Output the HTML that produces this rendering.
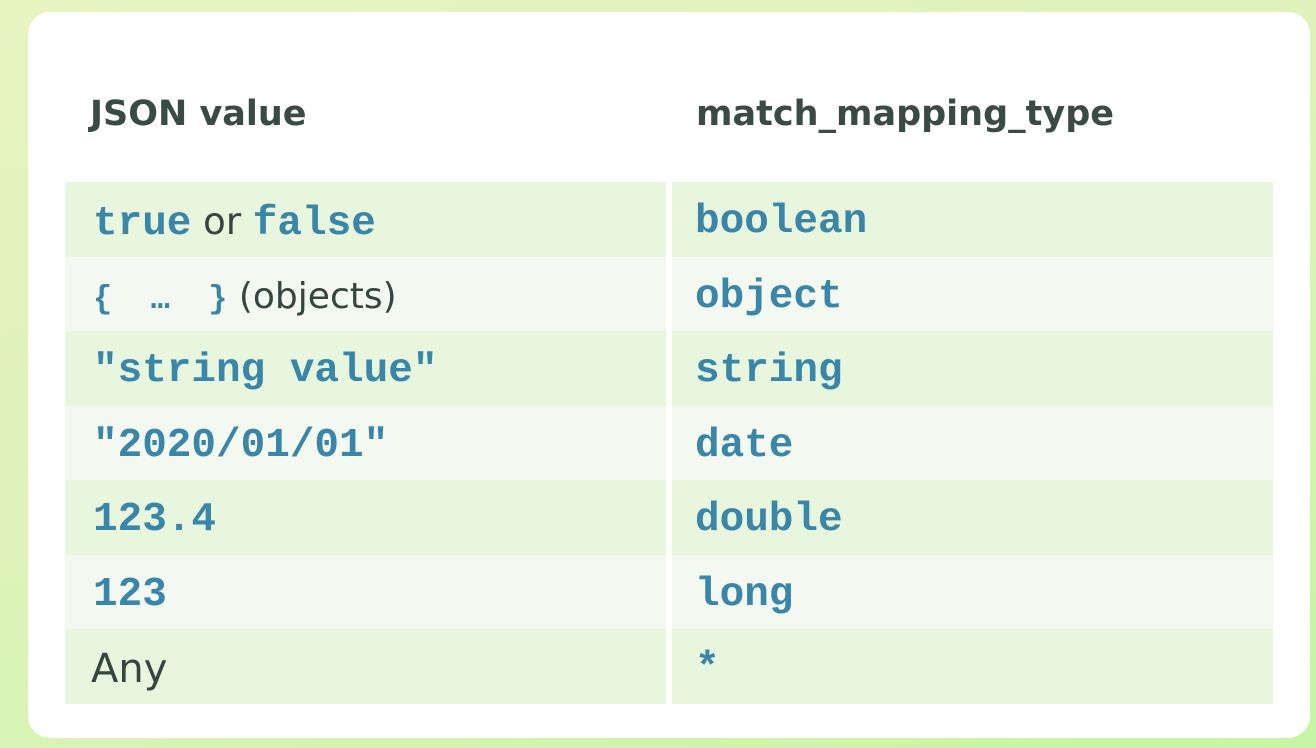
<!DOCTYPE html>
<html><head><style>
html,body{margin:0;padding:0;}
body{width:1316px;height:748px;overflow:hidden;background:linear-gradient(160deg,#e8f3c0 0%,#dcf3b8 50%,#c6f5a6 100%);position:relative;font-family:"Liberation Sans",sans-serif;}
.card{position:absolute;left:28px;top:12px;width:1282px;height:726px;background:#fff;border-radius:22px;}
.h{position:absolute;top:94px;font-weight:bold;color:#3a4a44;font-family:"DejaVu Sans","Liberation Sans",sans-serif;font-size:35px;}
.row{position:absolute;left:65px;width:1208px;height:74.5px;}
.c{position:absolute;top:0;height:100%;}
.l{left:0;width:601px;}
.r{left:607px;width:601px;}
.t{position:absolute;top:3px;line-height:74px;font-family:"Liberation Mono",monospace;font-weight:bold;font-size:41px;color:#3a86a8;white-space:pre;}
.s{font-family:"DejaVu Sans","Liberation Sans",sans-serif;font-weight:normal;font-size:36px;color:#354540;}
.o{background:#e9f6de}.e{background:#f3f9f0}
</style></head><body>
<div class="card"></div>
<div class="h" style="left:90px">JSON value</div>
<div class="h" style="left:696px">match_mapping_type</div>

<div class="row" style="top:182px"><div class="c l o"><div class="t" style="left:28px">true<span class="s" style="font-size:37px"> or </span>false</div></div><div class="c r o"><div class="t" style="left:23px">boolean</div></div></div>
<div class="row" style="top:256.5px"><div class="c l e"><div class="t" style="left:28px;font-size:32px">{  …  }<span class="s"> (objects)</span></div></div><div class="c r e"><div class="t" style="left:23px">object</div></div></div>
<div class="row" style="top:331px"><div class="c l o"><div class="t" style="left:28px">"string value"</div></div><div class="c r o"><div class="t" style="left:23px">string</div></div></div>
<div class="row" style="top:405.5px"><div class="c l e"><div class="t" style="left:28px">"2020/01/01"</div></div><div class="c r e"><div class="t" style="left:23px">date</div></div></div>
<div class="row" style="top:480px"><div class="c l o"><div class="t" style="left:28px">123.4</div></div><div class="c r o"><div class="t" style="left:23px">double</div></div></div>
<div class="row" style="top:554.5px"><div class="c l e"><div class="t" style="left:28px">123</div></div><div class="c r e"><div class="t" style="left:23px">long</div></div></div>
<div class="row" style="top:629px"><div class="c l o"><div class="t s" style="left:26px;font-size:40px">Any</div></div><div class="c r o"><div class="t" style="left:23px">*</div></div></div>
</body></html>
